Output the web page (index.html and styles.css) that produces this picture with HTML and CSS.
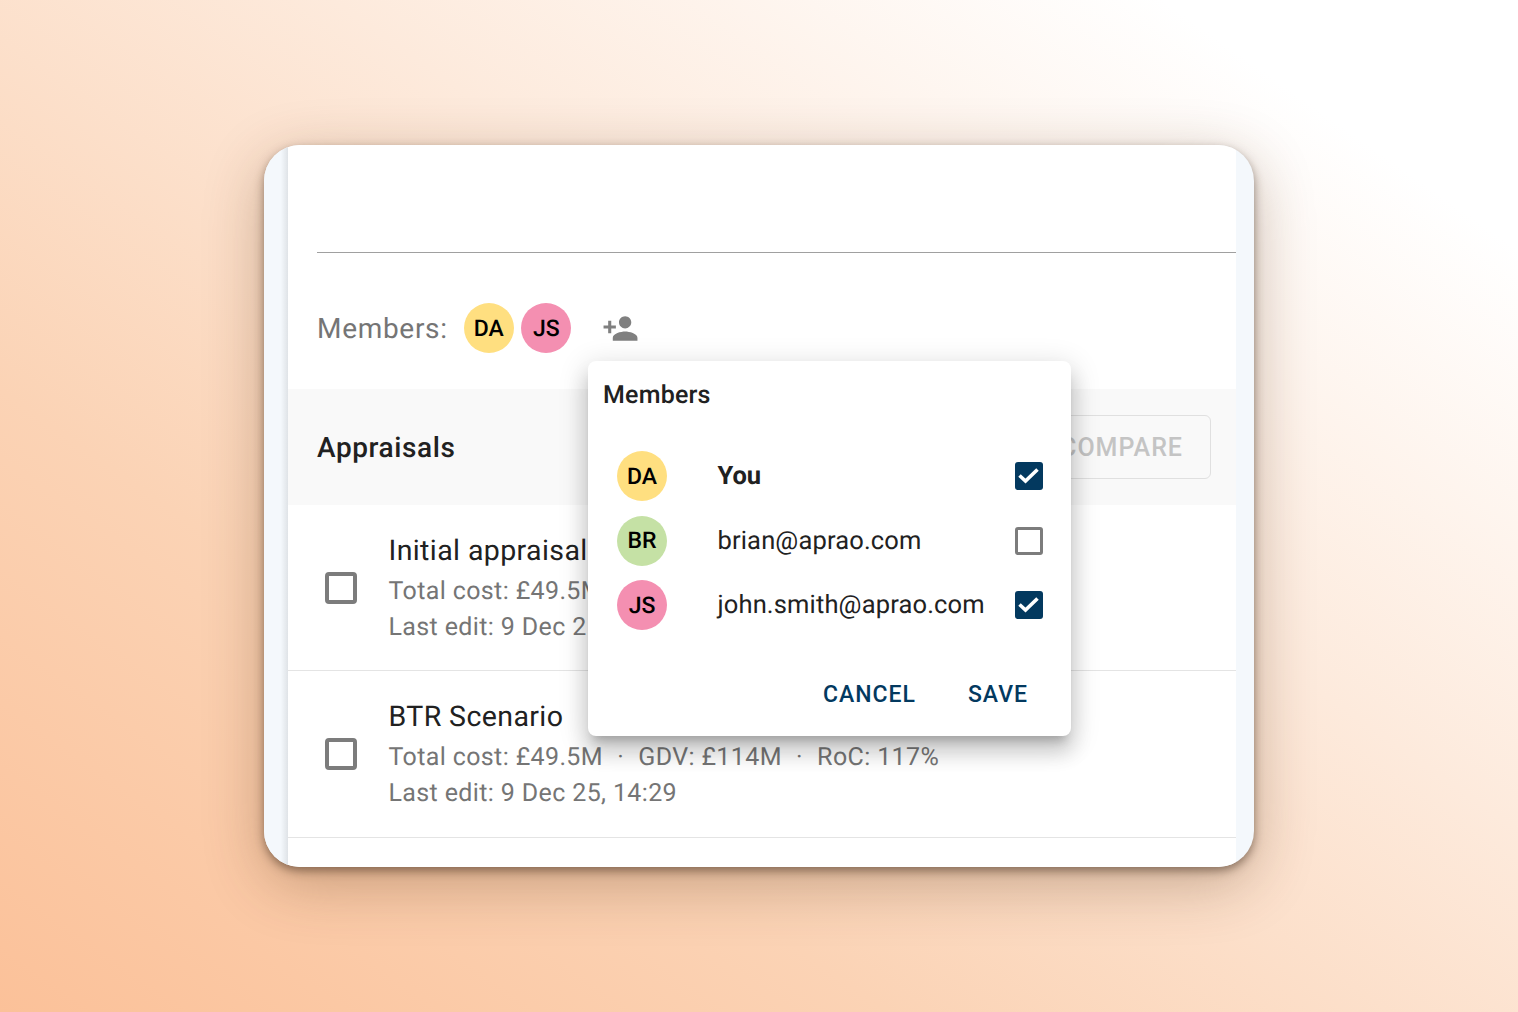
FILE: index.html
```html
<!DOCTYPE html>
<html lang="en">
<head>
    <meta charset="UTF-8">
    <meta name="viewport" content="width=device-width, initial-scale=1.0">
    <title>Members</title>
    <link rel="stylesheet" href="styles.css">
</head>
<body>
    <div class="card">
        <div class="rail rail-left"></div>

        <div class="panel">
            <div class="panel-top"></div>

            <!-- members row -->
            <div class="members-row">
                <span class="members-label">Members:</span>
                <div class="avatars">
                    <div class="avatar yellow">DA</div>
                    <div class="avatar pink">JS</div>
                </div>
                <svg class="add-icon" viewBox="0 0 24 24"><path d="M15 12c2.21 0 4-1.79 4-4s-1.79-4-4-4-4 1.79-4 4 1.79 4 4 4zm-9-2V7H4v3H1v2h3v3h2v-3h3v-2H6zm9 4c-2.67 0-8 1.34-8 4v2h16v-2c0-2.66-5.33-4-8-4z"/></svg>
            </div>

            <!-- appraisals header -->
            <div class="appraisals-head">
                <span class="appraisals-title">Appraisals</span>
                <button class="compare-btn">COMPARE</button>
            </div>

            <div class="appraisal">
                <span class="box box-large"></span>
                <div class="appraisal-text">
                    <div class="appraisal-name">Initial appraisal</div>
                    <div class="appraisal-meta">Total cost: £49.5M<span class="sep">·</span>GDV: £114M<span class="sep">·</span>RoC: 117%</div>
                    <div class="appraisal-meta">Last edit: 9 Dec 25, 14:29</div>
                </div>
            </div>
            <div class="appraisal">
                <span class="box box-large"></span>
                <div class="appraisal-text">
                    <div class="appraisal-name">BTR Scenario</div>
                    <div class="appraisal-meta">Total cost: £49.5M<span class="sep">·</span>GDV: £114M<span class="sep">·</span>RoC: 117%</div>
                    <div class="appraisal-meta">Last edit: 9 Dec 25, 14:29</div>
                </div>
            </div>
        </div>

        <div class="rail rail-right"></div>

        <!-- members dialog -->
        <div class="dialog">
            <div class="dialog-title">Members</div>
            <div class="dialog-list">
                <div class="dialog-row">
                    <div class="avatar yellow">DA</div>
                    <span class="dialog-name you">You</span>
                    <span class="box checked">
                        <svg viewBox="0 0 28 28"><path d="M4.5 13.5l6 5.5L22.5 7.5"/></svg>
                    </span>
                </div>
                <div class="dialog-row">
                    <div class="avatar green">BR</div>
                    <span class="dialog-name">brian@aprao.com</span>
                    <span class="box"></span>
                </div>
                <div class="dialog-row">
                    <div class="avatar pink">JS</div>
                    <span class="dialog-name">john.smith@aprao.com</span>
                    <span class="box checked">
                        <svg viewBox="0 0 28 28"><path d="M4.5 13.5l6 5.5L22.5 7.5"/></svg>
                    </span>
                </div>
            </div>
            <div class="dialog-actions">
                <button class="text-btn">CANCEL</button>
                <button class="text-btn">SAVE</button>
            </div>
        </div>
    </div>
</body>
</html>
```

FILE: styles.css
```css
* {
    box-sizing: border-box;
}

body {
    margin: 0;
    height: 100vh;
    overflow: hidden;
    font-family: Roboto, "Liberation Sans", sans-serif;
    text-rendering: geometricPrecision;
    background: linear-gradient(35deg, #fbc199 0%, #fbd3b5 30%, #fdeadc 60%, #ffffff 88%);
    padding: 145px 264px;
    color: #212121;
}

.card {
    position: relative;
    width: 990px;
    height: 722px;
    display: flex;
    border-radius: 36px;
    overflow: hidden;
    background-color: #f4f8fc;
    box-shadow: 0 4px 10px rgba(60, 40, 25, 0.5), 0 16px 60px rgba(90, 50, 20, 0.32);
}

.rail {
    flex: none;
    height: 100%;
}

.rail-left {
    width: 24px;
    background: linear-gradient(to right, #f4f8fc 70%, #dfe3e7 100%);
}

.rail-right {
    width: 18px;
}

.panel {
    flex: 1;
    min-width: 0;
    background-color: #fff;
}

.panel-top {
    height: 108px;
    margin-left: 29px;
    border-bottom: 1px solid #a0a0a0;
}

/* members row */
.members-row {
    height: 136px;
    padding: 14px 0 0 29px;
    display: flex;
    align-items: center;
}

.members-label {
    font-size: 28px;
    color: #757575;
    letter-spacing: 0.7px;
}

.avatars {
    display: flex;
    gap: 7.5px;
    margin-left: 16px;
}

.avatar {
    flex: none;
    width: 50px;
    height: 50px;
    border-radius: 50%;
    display: flex;
    align-items: center;
    justify-content: center;
    font-size: 23px;
    font-weight: 500;
    color: #000;
}

.yellow {
    background-color: #ffdf80;
}

.pink {
    background-color: #f48fb1;
}

.green {
    background-color: #c5e1a5;
}

.add-icon {
    flex: none;
    width: 37px;
    height: 37px;
    margin-left: 31px;
    fill: #808080;
}

/* appraisals */
.appraisals-head {
    height: 116px;
    padding: 0 25px 0 29px;
    display: flex;
    align-items: center;
    justify-content: space-between;
    background-color: #f9f9f9;
}

.appraisals-title {
    font-size: 28px;
    font-weight: 500;
    letter-spacing: 0.6px;
}

.compare-btn {
    height: 64px;
    padding: 0 27px;
    font-family: inherit;
    font-size: 25px;
    font-weight: 500;
    letter-spacing: 1px;
    color: #c4c4c4;
    background: none;
    border: 1px solid #e0e0e0;
    border-radius: 6px;
}

.appraisal {
    height: 166px;
    padding-left: 37px;
    display: flex;
    align-items: center;
    gap: 31.5px;
    border-bottom: 1px solid #e4e4e4;
}

.appraisal + .appraisal {
    height: 167px;
}

.appraisal-text {
    display: flex;
    flex-direction: column;
}

.appraisal-name {
    font-size: 28.5px;
    line-height: 42px;
    letter-spacing: 0.4px;
    margin-bottom: 2px;
}

.appraisal-meta {
    font-size: 25px;
    line-height: 36px;
    color: #757575;
    letter-spacing: 0.37px;
}

.sep {
    padding: 0 14.2px;
}

/* checkboxes */
.box {
    flex: none;
    width: 28px;
    height: 28px;
    display: block;
    border: 3.5px solid #7c7c7c;
    border-radius: 3px;
}

.box-large {
    width: 32px;
    height: 32px;
    border-width: 4px;
    border-radius: 4px;
}

.checked {
    border: none;
    background-color: #03395f;
}

.checked svg {
    display: block;
    width: 28px;
    height: 28px;
    fill: none;
    stroke: #fff;
    stroke-width: 3.6px;
}

/* dialog */
.dialog {
    position: absolute;
    left: 324px;
    top: 216px;
    width: 483px;
    height: 375px;
    padding: 0 28px 0 15px;
    display: flex;
    flex-direction: column;
    background-color: #fff;
    border-radius: 8px;
    box-shadow: 0 10px 10px -6px rgba(0, 0, 0, 0.2), 0 16px 20px 2px rgba(0, 0, 0, 0.14), 0 6px 28px 4px rgba(0, 0, 0, 0.12);
}

.dialog-title {
    height: 83px;
    padding-top: 19px;
    font-size: 25px;
    font-weight: 500;
    line-height: 32px;
    letter-spacing: 0.2px;
}

.dialog-row {
    height: 64.5px;
    padding-left: 14px;
    display: flex;
    align-items: center;
}

.dialog-name {
    flex: 1;
    margin-left: 50.5px;
    font-size: 25.5px;
    letter-spacing: 0.15px;
}

.you {
    font-weight: 700;
    letter-spacing: 0;
}

.dialog-actions {
    margin-top: 41px;
    display: flex;
    justify-content: flex-end;
    gap: 52px;
    padding-right: 15px;
}

.text-btn {
    padding: 0;
    font-family: inherit;
    font-size: 23px;
    font-weight: 500;
    letter-spacing: 1px;
    line-height: 32px;
    color: #03395f;
    background: none;
    border: none;
}
```
